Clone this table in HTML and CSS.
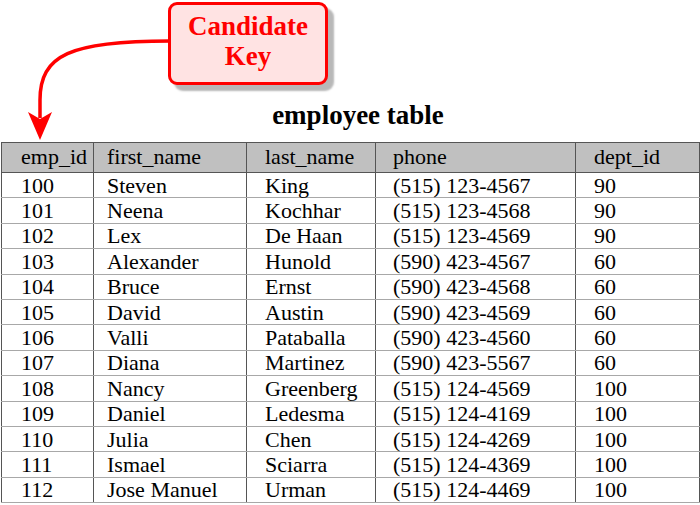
FILE: index.html
```html
<!DOCTYPE html>
<html>
<head>
<meta charset="utf-8">
<link rel="stylesheet" href="styles.css">
</head>
<body>
<div class="top">
  <svg class="arrow" width="180" height="150" viewBox="0 0 180 150">
    <path d="M170,41 C70,41 40,55 40,100 L40,118" fill="none" stroke="#ff0000" stroke-width="3.5"/>
    <path d="M40,140 L28,112 L40,119 L52,112 Z" fill="#ff0000"/>
  </svg>
  <div class="callout">Candidate<br>Key</div>
</div>
<h1 class="title">employee table</h1>
<table class="emp">
  <colgroup>
    <col class="c1"><col class="c2"><col class="c3"><col class="c4"><col class="c5">
  </colgroup>
  <thead>
    <tr><th class="p1">emp_id</th><th class="p2">first_name</th><th class="p3">last_name</th><th class="p4">phone</th><th class="p5">dept_id</th></tr>
  </thead>
  <tbody>
    <tr><td class="p1">100</td><td class="p2">Steven</td><td class="p3">King</td><td class="p4">(515) 123-4567</td><td class="p5">90</td></tr>
    <tr><td class="p1">101</td><td class="p2">Neena</td><td class="p3">Kochhar</td><td class="p4">(515) 123-4568</td><td class="p5">90</td></tr>
    <tr><td class="p1">102</td><td class="p2">Lex</td><td class="p3">De Haan</td><td class="p4">(515) 123-4569</td><td class="p5">90</td></tr>
    <tr><td class="p1">103</td><td class="p2">Alexander</td><td class="p3">Hunold</td><td class="p4">(590) 423-4567</td><td class="p5">60</td></tr>
    <tr><td class="p1">104</td><td class="p2">Bruce</td><td class="p3">Ernst</td><td class="p4">(590) 423-4568</td><td class="p5">60</td></tr>
    <tr><td class="p1">105</td><td class="p2">David</td><td class="p3">Austin</td><td class="p4">(590) 423-4569</td><td class="p5">60</td></tr>
    <tr><td class="p1">106</td><td class="p2">Valli</td><td class="p3">Pataballa</td><td class="p4">(590) 423-4560</td><td class="p5">60</td></tr>
    <tr><td class="p1">107</td><td class="p2">Diana</td><td class="p3">Martinez</td><td class="p4">(590) 423-5567</td><td class="p5">60</td></tr>
    <tr><td class="p1">108</td><td class="p2">Nancy</td><td class="p3">Greenberg</td><td class="p4">(515) 124-4569</td><td class="p5">100</td></tr>
    <tr><td class="p1">109</td><td class="p2">Daniel</td><td class="p3">Ledesma</td><td class="p4">(515) 124-4169</td><td class="p5">100</td></tr>
    <tr><td class="p1">110</td><td class="p2">Julia</td><td class="p3">Chen</td><td class="p4">(515) 124-4269</td><td class="p5">100</td></tr>
    <tr><td class="p1">111</td><td class="p2">Ismael</td><td class="p3">Sciarra</td><td class="p4">(515) 124-4369</td><td class="p5">100</td></tr>
    <tr><td class="p1">112</td><td class="p2">Jose Manuel</td><td class="p3">Urman</td><td class="p4">(515) 124-4469</td><td class="p5">100</td></tr>
  </tbody>
</table>
</body>
</html>
```

FILE: styles.css
```css
html, body {
  margin: 0;
  padding: 0;
  background: #ffffff;
}
body {
  font-family: "Liberation Serif", "Times New Roman", serif;
  color: #000;
  width: 700px;
  height: 505px;
  overflow: hidden;
}
.top {
  position: relative;
  height: 100px;
  padding-top: 2px;
  box-sizing: border-box;
}
.arrow {
  position: absolute;
  left: 0;
  top: 0;
}
.callout {
  position: relative;
  margin-left: 168px;
  width: 160px;
  height: 83px;
  box-sizing: border-box;
  border: 3px solid #ff0000;
  border-radius: 9px;
  background: #ffe3e3;
  box-shadow: 6px 6px 2px #b8b8b8;
  color: #ff0000;
  font-weight: bold;
  font-size: 27px;
  line-height: 30px;
  text-align: center;
  padding-top: 6px;
}
.title {
  margin: 0;
  font-size: 27px;
  line-height: 31px;
  font-weight: bold;
  text-align: center;
  padding-left: 16px;
}
.emp {
  margin-top: 11px;
  margin-left: 1px;
  width: 698px;
  border-collapse: collapse;
  table-layout: fixed;
  font-size: 22px;
  border: 1.5px solid #555;
}
.c1 { width: 92px; }
.c2 { width: 153px; }
.c3 { width: 129px; }
.c4 { width: 200px; }
.c5 { width: 124px; }
.emp th {
  background: #c0c0c0;
  font-weight: normal;
  text-align: left;
  height: 27px;
  padding: 0 0 2px 0;
  border-left: 1.5px solid #555;
  border-bottom: 1.5px solid #555;
  line-height: 24px;
}
.emp td {
  height: 23.4px;
  padding: 1px 0 0 0;
  line-height: 22px;
  border-left: 1.5px solid #555;
  border-bottom: 1px solid #a8a8a8;
  white-space: nowrap;
}
.p1 { padding-left: 19px !important; }
.p2 { padding-left: 13px !important; }
.p3 { padding-left: 18px !important; }
.p4 { padding-left: 17px !important; }
.p5 { padding-left: 18px !important; }
```
